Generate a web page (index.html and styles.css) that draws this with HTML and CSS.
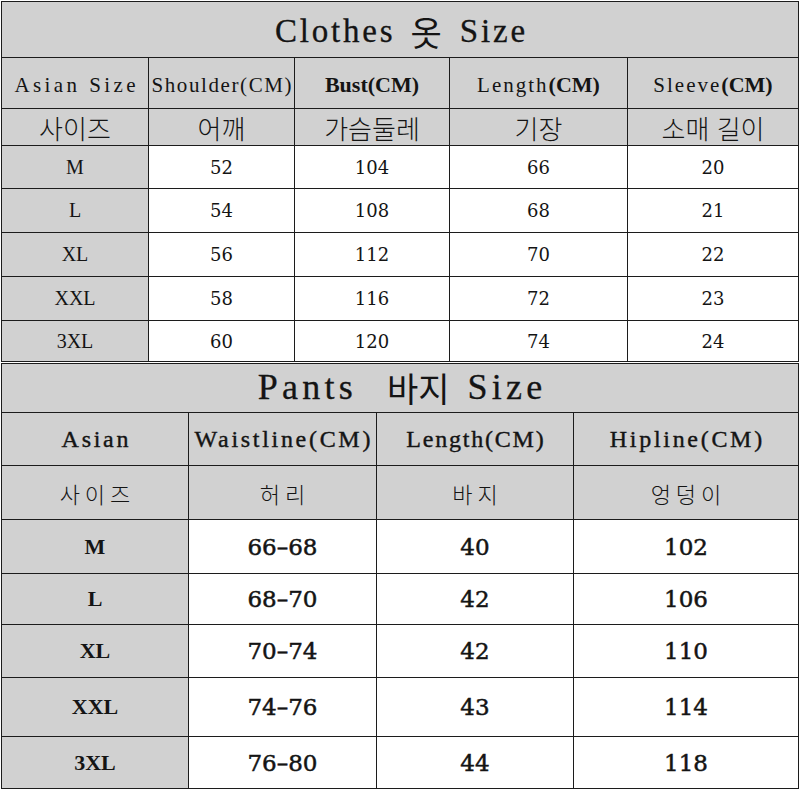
FILE: index.html
```html
<!DOCTYPE html>
<html lang="ko">
<head>
<meta charset="utf-8">
<title>Size Chart</title>
<link rel="stylesheet" href="styles.css">
</head>
<body>
<div class="sheet">
  <div class="tbl clothes">
    <div class="cell g title span5"><span class="lat">Clothes</span><span class="krt">옷</span><span class="lat">Size</span></div>

    <div class="cell g hd"><span class="mono wide">Asian Size</span></div>
    <div class="cell g hd"><span class="mono tight">Shoulder(CM)</span></div>
    <div class="cell g hd"><span class="bold">Bust(CM)</span></div>
    <div class="cell g hd"><span class="mono">Length</span><span class="bold">(CM)</span></div>
    <div class="cell g hd"><span class="mono">Sleeve</span><span class="bold">(CM)</span></div>

    <div class="cell g kr">사이즈</div>
    <div class="cell g kr">어깨</div>
    <div class="cell g kr">가슴둘레</div>
    <div class="cell g kr">기장</div>
    <div class="cell g kr">소매 길이</div>

    <div class="cell g lab">M</div><div class="cell num">52</div><div class="cell num">104</div><div class="cell num">66</div><div class="cell num">20</div>
    <div class="cell g lab">L</div><div class="cell num">54</div><div class="cell num">108</div><div class="cell num">68</div><div class="cell num">21</div>
    <div class="cell g lab">XL</div><div class="cell num">56</div><div class="cell num">112</div><div class="cell num">70</div><div class="cell num">22</div>
    <div class="cell g lab">XXL</div><div class="cell num">58</div><div class="cell num">116</div><div class="cell num">72</div><div class="cell num">23</div>
    <div class="cell g lab">3XL</div><div class="cell num">60</div><div class="cell num">120</div><div class="cell num">74</div><div class="cell num">24</div>
  </div>

  <div class="tbl pants">
    <div class="cell g title ptitle span4"><span class="lat">Pants</span><span class="krt">바지</span><span class="lat">Size</span></div>

    <div class="cell g phd">Asian</div>
    <div class="cell g phd">Waistline(CM)</div>
    <div class="cell g phd narrow">Length(CM)</div>
    <div class="cell g phd">Hipline(CM)</div>

    <div class="cell g pkr">사이즈</div>
    <div class="cell g pkr">허리</div>
    <div class="cell g pkr">바지</div>
    <div class="cell g pkr">엉덩이</div>

    <div class="cell g plab">M</div><div class="cell pnum">66–68</div><div class="cell pnum">40</div><div class="cell pnum">102</div>
    <div class="cell g plab">L</div><div class="cell pnum">68–70</div><div class="cell pnum">42</div><div class="cell pnum">106</div>
    <div class="cell g plab">XL</div><div class="cell pnum">70–74</div><div class="cell pnum">42</div><div class="cell pnum">110</div>
    <div class="cell g plab">XXL</div><div class="cell pnum">74–76</div><div class="cell pnum">43</div><div class="cell pnum">114</div>
    <div class="cell g plab">3XL</div><div class="cell pnum">76–80</div><div class="cell pnum">44</div><div class="cell pnum">118</div>
  </div>
</div>
</body>
</html>
```

FILE: styles.css
```css
html, body {
  margin: 0;
  padding: 0;
  background: #ffffff;
}

.sheet {
  padding: 1px 0 0 1px;
  display: flex;
  flex-direction: column;
  gap: 1px;
  color: #141414;
}

.tbl {
  display: grid;
  gap: 1px;
  padding: 1px;
  background: #1c1c1c;
  width: max-content;
}

.clothes {
  grid-template-columns: 146px 145px 154px 177px 170px;
  grid-template-rows: 55px 50px 36px 42px 43px 43px 43px 40px;
}

.pants {
  grid-template-columns: 186px 187px 196px 224px;
  grid-template-rows: 48px 52px 53px 53px 50px 52px 58px 51px;
}

.cell {
  display: flex;
  align-items: center;
  justify-content: center;
  background: #ffffff;
  white-space: nowrap;
}

.g {
  background: #d1d1d1;
}

.span5 { grid-column: 1 / span 5; }
.span4 { grid-column: 1 / span 4; }

/* titles */
.title {
  gap: 18px;
  padding-top: 4px;
}

.title .lat {
  font-family: "Liberation Serif", serif;
  font-size: 33px;
  line-height: 1.1;
  letter-spacing: 2.8px;
  margin-right: -2.8px;
  -webkit-text-stroke: 0.3px #141414;
}

.title .krt {
  font-family: "Noto Sans CJK KR", sans-serif;
  font-weight: 400;
  font-size: 34px;
  line-height: 1.1;
}

.ptitle {
  gap: 18px;
  padding-top: 0;
}

.ptitle .lat {
  font-size: 36px;
  letter-spacing: 4.3px;
  margin-right: -4.3px;
}

.ptitle .krt {
  font-size: 34px;
  margin-left: 16px;
}

/* clothes header */
.hd {
  padding-top: 4px;
}

.mono {
  font-family: "Liberation Serif", serif;
  font-size: 21px;
  letter-spacing: 2px;
}

.mono.wide {
  letter-spacing: 3.4px;
  margin-right: -3.4px;
}

.mono.tight {
  letter-spacing: 1.6px;
  margin-right: -1.6px;
}

.bold {
  font-family: "Liberation Serif", serif;
  font-weight: bold;
  font-size: 22px;
}

.kr {
  font-family: "Noto Sans CJK KR", sans-serif;
  font-weight: 300;
  font-size: 26px;
  line-height: 1;
  padding-top: 2px;
}

.lab {
  font-family: "Liberation Serif", serif;
  font-size: 20px;
}

.num {
  font-family: "DejaVu Serif", serif;
  font-size: 18px;
}

/* pants */
.phd {
  font-family: "Liberation Serif", serif;
  font-size: 24px;
  letter-spacing: 2.7px;
  text-indent: 2.7px;
  -webkit-text-stroke: 0.4px #141414;
}

.phd.narrow {
  letter-spacing: 1.8px;
  text-indent: 1.8px;
}

.pkr {
  font-family: "Noto Sans CJK KR", sans-serif;
  font-weight: 300;
  font-size: 22px;
  letter-spacing: 5px;
  text-indent: 5px;
  line-height: 1;
}

.plab {
  font-family: "Liberation Serif", serif;
  font-weight: bold;
  font-size: 22px;
}

.pnum {
  font-family: "DejaVu Serif", serif;
  font-size: 23px;
  -webkit-text-stroke: 0.5px #141414;
}
```
